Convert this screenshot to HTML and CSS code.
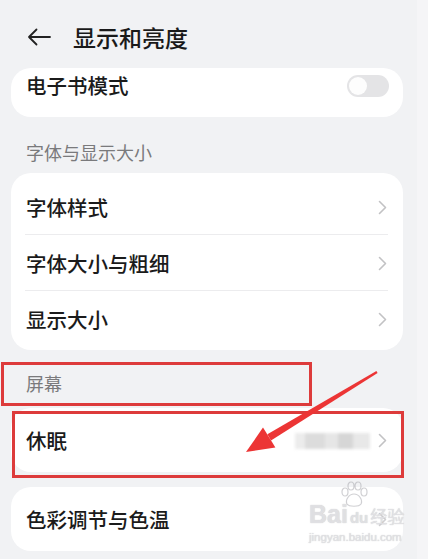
FILE: index.html
```html
<!DOCTYPE html>
<html lang="zh-CN">
<head>
<meta charset="utf-8">
<title>显示和亮度</title>
<link rel="stylesheet" href="styles.css">
</head>
<body>
<div class="screen">
  <main class="main">
    <header class="topbar">
      <svg class="back" width="24" height="18" viewBox="0 0 24 18"><path d="M23 9H2M9.5 1.5L2 9l7.5 7.5" fill="none" stroke="#222" stroke-width="1.8" stroke-linecap="round" stroke-linejoin="round"/></svg>
      <h1 class="title">显示和亮度</h1>
    </header>

    <section class="card card-top">
      <div class="row row-toggle">
        <span class="label">电子书模式</span>
        <span class="toggle"><span class="knob"></span></span>
      </div>
    </section>

    <div class="section-title st1">字体与显示大小</div>
    <section class="card card-list">
      <div class="row row-56 divided">
        <span class="label">字体样式</span>
        <svg class="chev" width="9" height="15" viewBox="0 0 9 15"><path d="M1.5 1.5L7.5 7.5L1.5 13.5" fill="none" stroke="#c2c2c4" stroke-width="1.6" stroke-linecap="round" stroke-linejoin="round"/></svg>
      </div>
      <div class="row row-56 divided">
        <span class="label">字体大小与粗细</span>
        <svg class="chev" width="9" height="15" viewBox="0 0 9 15"><path d="M1.5 1.5L7.5 7.5L1.5 13.5" fill="none" stroke="#c2c2c4" stroke-width="1.6" stroke-linecap="round" stroke-linejoin="round"/></svg>
      </div>
      <div class="row row-56">
        <span class="label">显示大小</span>
        <svg class="chev" width="9" height="15" viewBox="0 0 9 15"><path d="M1.5 1.5L7.5 7.5L1.5 13.5" fill="none" stroke="#c2c2c4" stroke-width="1.6" stroke-linecap="round" stroke-linejoin="round"/></svg>
      </div>
    </section>

    <div class="section-title st2">屏幕</div>
    <section class="card card-single">
      <div class="row row-64">
        <span class="label">休眠</span>
        <span class="value-blur"></span>
        <svg class="chev" width="9" height="15" viewBox="0 0 9 15"><path d="M1.5 1.5L7.5 7.5L1.5 13.5" fill="none" stroke="#c2c2c4" stroke-width="1.6" stroke-linecap="round" stroke-linejoin="round"/></svg>
      </div>
    </section>

    <section class="card card-single card-last">
      <div class="row row-64">
        <span class="label">色彩调节与色温</span>
        <svg class="chev" width="9" height="15" viewBox="0 0 9 15"><path d="M1.5 1.5L7.5 7.5L1.5 13.5" fill="none" stroke="#d0d0d2" stroke-width="1.6" stroke-linecap="round" stroke-linejoin="round"/></svg>
      </div>
    </section>
  </main>
  <div class="scroll-strip"></div>

  <div class="watermark">
    <svg class="wm-paw" width="30" height="26" viewBox="0 0 30 26">
      <g fill="none" stroke="rgba(170,170,175,0.55)" stroke-width="1.2">
        <ellipse cx="6" cy="11" rx="3" ry="4"/>
        <ellipse cx="12" cy="5" rx="3" ry="4"/>
        <ellipse cx="19" cy="5" rx="3" ry="4"/>
        <ellipse cx="25" cy="11" rx="3" ry="4"/>
        <path d="M15 13c-5 0-9 6-7 10 2 3 12 3 14 0 2-4-2-10-7-10z"/>
      </g>
    </svg>
    <div class="wm-top"><span class="wm-bai">Bai</span><span class="wm-du">du</span><span class="wm-jy">经验</span></div>
    <div class="wm-url">jingyan.baidu.com</div>
  </div>

  <svg class="annot" width="428" height="559" viewBox="0 0 428 559">
    <rect x="2.5" y="363.5" width="308" height="41" fill="none" stroke="#dd3b3b" stroke-width="3"/>
    <rect x="13.5" y="412.5" width="389" height="64" fill="none" stroke="#dd3b3b" stroke-width="3"/>
    <polygon points="377.6,373 376.4,371 267.4,434.2 271,440.6" fill="#ec3535"/>
    <polygon points="246,452 263,427.6 275.4,447.4" fill="#ec3535"/>
  </svg>
</div>
</body>
</html>
```

FILE: styles.css
```css
* { box-sizing: border-box; }
html, body { margin: 0; padding: 0; }
body {
  background: #f1f2f4;
  font-family: "Noto Sans CJK SC", "Noto Sans", sans-serif;
  color: #1b1b1b;
}
.screen {
  position: relative;
  width: 428px;
  height: 559px;
  overflow: hidden;
  display: flex;
}
.main {
  width: 417px;
  padding-left: 11px;
  padding-right: 14px;
}
.scroll-strip {
  width: 11px;
  background: #f5f5f7;
}
.topbar {
  height: 60px;
  padding-top: 14px;
  display: flex;
  align-items: flex-start;
  gap: 22px;
  padding-left: 16px;
}
.back { margin-top: 14px; }
.title {
  margin: 0;
  font-size: 23px;
  font-weight: 500;
  line-height: 46px;
  color: #1a1a1a;
}
.card {
  background: #ffffff;
  border-radius: 20px;
}
.card-top {
  margin-top: 8px;
  height: 49px;
}
.row {
  display: flex;
  align-items: center;
  padding: 0 16px 0 15px;
}
.label {
  font-size: 20.5px;
  font-weight: 500;
  line-height: 28px;
  color: #1b1b1b;
  flex: 1;
}
.row-toggle { height: 34px; padding-right: 14px; }
.toggle {
  width: 42px;
  height: 22px;
  border-radius: 11px;
  background: #e4e4e6;
  padding: 2px;
  display: flex;
  margin-top: 1px;
}
.knob {
  width: 18px;
  height: 18px;
  border-radius: 50%;
  background: #fdfdfd;
}
.section-title {
  font-size: 18px;
  line-height: 24px;
  color: #7a7a7c;
  padding-left: 15px;
}
.st1 { margin-top: 23px; margin-bottom: 9px; }
.st2 { margin-top: 21px; margin-bottom: 13px; }
.card-list { padding: 6px 0 3px; height: 177px; }
.row-56 { height: 56px; position: relative; }
.divided::after {
  content: "";
  position: absolute;
  left: 14px;
  right: 15px;
  bottom: 0;
  height: 1px;
  background: #ececee;
}
.row-64 { height: 64px; }
.card-single { height: 64px; }
.card-last { margin-top: 15px; }
.chev { flex: none; }
.value-blur {
  width: 75px;
  height: 16px;
  margin-right: 8px;
  margin-top: 2px;
  background: linear-gradient(90deg, #ececec 0 14%, #dcdcdc 14% 40%, #e6e6e6 40% 58%, #d6d6d6 58% 78%, #e8e8e8 78% 100%);
  filter: blur(1.5px);
}
.watermark {
  position: absolute;
  left: 309px;
  top: 481px;
  width: 96px;
  color: rgba(228, 228, 231, 0.9);
  text-shadow: 0 0 1px rgba(150,150,155,0.6);
  font-family: "Liberation Sans", sans-serif;
  pointer-events: none;
}
.wm-paw { display: block; margin-left: 30px; }
.wm-top { display: flex; align-items: flex-end; gap: 2px; margin-top: -6px; }
.wm-bai { font-size: 25px; font-weight: 700; line-height: 26px; }
.wm-du { font-size: 15px; font-weight: 700; line-height: 18px; }
.wm-jy { font-size: 17px; line-height: 22px; font-family: "Noto Sans CJK SC", sans-serif; }
.wm-url { font-size: 11.5px; line-height: 16px; margin-top: 2px; }
.annot {
  position: absolute;
  left: 0;
  top: 0;
  pointer-events: none;
}
```
